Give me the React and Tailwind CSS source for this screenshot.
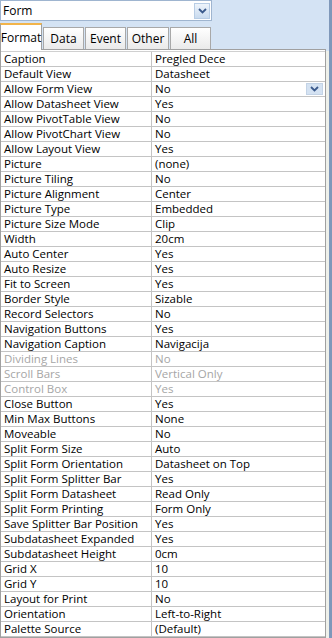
import React from "react";

const rows = [
  ["Caption", "Pregled Dece"],
  ["Default View", "Datasheet"],
  ["Allow Form View", "No", "dd"],
  ["Allow Datasheet View", "Yes"],
  ["Allow PivotTable View", "No"],
  ["Allow PivotChart View", "No"],
  ["Allow Layout View", "Yes"],
  ["Picture", "(none)"],
  ["Picture Tiling", "No"],
  ["Picture Alignment", "Center"],
  ["Picture Type", "Embedded"],
  ["Picture Size Mode", "Clip"],
  ["Width", "20cm"],
  ["Auto Center", "Yes"],
  ["Auto Resize", "Yes"],
  ["Fit to Screen", "Yes"],
  ["Border Style", "Sizable"],
  ["Record Selectors", "No"],
  ["Navigation Buttons", "Yes"],
  ["Navigation Caption", "Navigacija"],
  ["Dividing Lines", "No", "dis"],
  ["Scroll Bars", "Vertical Only", "dis"],
  ["Control Box", "Yes", "dis"],
  ["Close Button", "Yes"],
  ["Min Max Buttons", "None"],
  ["Moveable", "No"],
  ["Split Form Size", "Auto"],
  ["Split Form Orientation", "Datasheet on Top"],
  ["Split Form Splitter Bar", "Yes"],
  ["Split Form Datasheet", "Read Only"],
  ["Split Form Printing", "Form Only"],
  ["Save Splitter Bar Position", "Yes"],
  ["Subdatasheet Expanded", "Yes"],
  ["Subdatasheet Height", "0cm"],
  ["Grid X", "10"],
  ["Grid Y", "10"],
  ["Layout for Print", "No"],
  ["Orientation", "Left-to-Right"],
  ["Palette Source", "(Default)"],
];

function Chevron() {
  return (
    <svg width="9" height="6" viewBox="0 0 9 6">
      <path d="M1 1 L4.5 4.5 L8 1" fill="none" stroke="#3b5a8c" strokeWidth="1.8" />
    </svg>
  );
}

function Tab({ label, active, w }) {
  if (active) {
    return (
      <div
        className={`${w} h-[27px] bg-white border-t-2 border-t-[#f2b44a] border-l border-r border-[#a0a0a0] flex items-center justify-center text-[12px] leading-[14px] text-black relative -mb-px z-10`}
      >
        {label}
      </div>
    );
  }
  return (
    <div
      className={`${w} h-[22px] bg-gradient-to-b from-white to-[#eaeaea] border border-b-0 border-[#a8a8a8] flex items-center justify-center pt-[1px] text-[12px] leading-[14px] text-black`}
    >
      {label}
    </div>
  );
}

export default function App() {
  return (
    <div
      className="w-[332px] h-[638px] bg-[#d4e3f4] overflow-hidden flex"
      style={{ fontFamily: '"Open Sans", "Noto Sans", sans-serif' }}
    >
      <div className="w-[326px] flex flex-col">
        <div className="h-[22px] w-[212px] bg-white border border-[#9fb5d0] flex items-center justify-between pl-[2px] pr-[1px] text-[12px] leading-[14px] text-black">
          <span>Form</span>
          <div className="w-[16px] h-[16px] bg-gradient-to-b from-[#eef4fb] to-[#c9dbef] border border-[#b8cde5] flex items-center justify-center">
            <Chevron />
          </div>
        </div>
        <div className="h-[29px] flex items-end gap-[1px] pl-0 mt-[0px]">
          <Tab label="Format" active w="w-[42px]" />
          <Tab label="Data" w="w-[41px]" />
          <Tab label="Event" w="w-[41px]" />
          <Tab label="Other" w="w-[42px]" />
          <Tab label="All" w="w-[41px]" />
        </div>
        <div className="border border-[#a0a0a0] bg-white flex-1">
          <div className="border-t border-[#d0d0d0] mt-[1px]">
            {rows.map(([k, v, f]) => (
              <div
                key={k}
                className="h-[15px] flex border-b border-[#c4c4c4] text-[11.5px] leading-[14px]"
              >
                <div
                  className={`w-[151px] pl-[3px] border-r border-[#c4c4c4] whitespace-nowrap overflow-hidden ${
                    f === "dis" ? "text-[#a6a6a6]" : "text-black"
                  }`}
                >
                  {k}
                </div>
                <div
                  className={`flex-1 pl-[3px] flex items-center justify-between whitespace-nowrap ${
                    f === "dis" ? "text-[#a6a6a6]" : "text-black"
                  }`}
                >
                  <span className="leading-[14px]">{v}</span>
                  {f === "dd" && (
                    <div className="w-[17px] h-[12px] mr-[2px] bg-[#d4e2f2] border border-[#c3d3e6] flex items-center justify-center">
                      <Chevron />
                    </div>
                  )}
                </div>
              </div>
            ))}
          </div>
        </div>
      </div>
      <div className="w-[3px] flex flex-col">
        <div className="h-[51px] bg-[#d4e3f4]" />
        <div className="flex-1 bg-[#eef0ea]" />
      </div>
      <div className="w-[3px] bg-[#7f98ba]" />
    </div>
  );
}
